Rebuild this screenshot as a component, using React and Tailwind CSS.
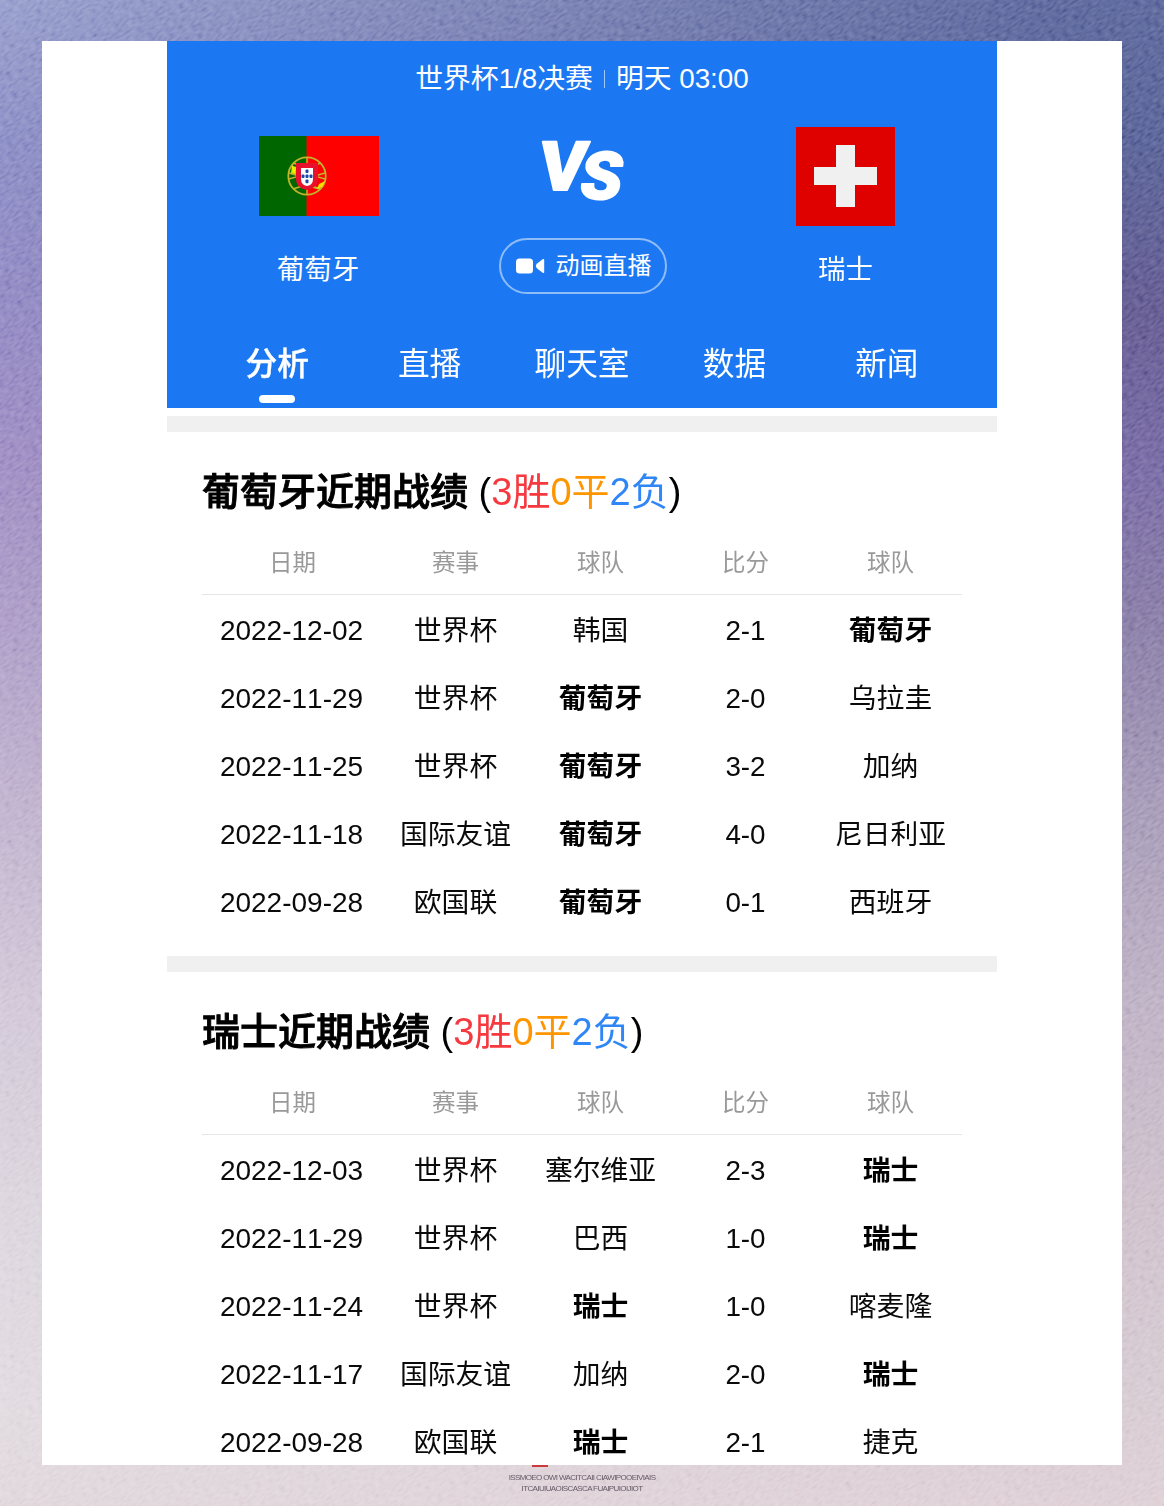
import React from "react";

const reports = [
  {
    team: "葡萄牙",
    rows: [
      ["2022-12-02", "世界杯", "韩国", "2-1", "葡萄牙"],
      ["2022-11-29", "世界杯", "葡萄牙", "2-0", "乌拉圭"],
      ["2022-11-25", "世界杯", "葡萄牙", "3-2", "加纳"],
      ["2022-11-18", "国际友谊", "葡萄牙", "4-0", "尼日利亚"],
      ["2022-09-28", "欧国联", "葡萄牙", "0-1", "西班牙"],
    ],
  },
  {
    team: "瑞士",
    rows: [
      ["2022-12-03", "世界杯", "塞尔维亚", "2-3", "瑞士"],
      ["2022-11-29", "世界杯", "巴西", "1-0", "瑞士"],
      ["2022-11-24", "世界杯", "瑞士", "1-0", "喀麦隆"],
      ["2022-11-17", "国际友谊", "加纳", "2-0", "瑞士"],
      ["2022-09-28", "欧国联", "瑞士", "2-1", "捷克"],
    ],
  },
];

const tabs = ["分析", "直播", "聊天室", "数据", "新闻"];
const columns = ["日期", "赛事", "球队", "比分", "球队"];

function Backdrop() {
  return (
    <div className="absolute inset-0">
      <div className="absolute inset-0 bg-[linear-gradient(180deg,#9299c9_0px,#8688c2_140px,#8c84c0_300px,#9a88c0_460px,#a796c4_600px,#bbaccb_780px,#d0c5d6_1000px,#dad3dc_1200px,#dfd9df_1400px,#dfd5da_1506px)]" />
      <div className="absolute inset-0 bg-[linear-gradient(180deg,#566197_0px,#525c92_140px,#5d548c_310px,#7264a0_470px,#8377a2_620px,#a095b3_800px,#baadc1_1000px,#cbbdc9_1200px,#d5c8d0_1400px,#dccdd3_1506px)] [mask-image:linear-gradient(90deg,transparent_0%,black_90%)]" />
      <svg className="absolute inset-0 h-full w-full mix-blend-soft-light" aria-hidden="true">
        <filter id="grain" x="0" y="0" width="100%" height="100%">
          <feTurbulence type="fractalNoise" baseFrequency="0.17 0.42" numOctaves="1" seed="4" />
          <feColorMatrix values="1.6 0 0 0 -0.3  1.6 0 0 0 -0.3  1.6 0 0 0 -0.3  0 0 0 0 1" />
        </filter>
        <rect x="-900" y="-400" width="2800" height="2800" filter="url(#grain)" opacity="0.45" transform="rotate(-32 582 753)" />
      </svg>
    </div>
  );
}

function PortugalFlag() {
  return (
    <svg className="h-[80px] w-[120px]" viewBox="0 0 120 80">
      <rect width="120" height="80" fill="#f00" />
      <rect width="47.5" height="80" fill="#060" />
      <g fill="none" stroke="#c2b42b" strokeWidth="1.5">
        <circle cx="48" cy="40" r="18.7" strokeWidth="1.8" />
        <path d="M30 37Q48 44 66 37M30 43Q48 36 66 43" />
        <path d="M34 27 Q48 33 62 27M34 53 Q48 47 62 53M33 29 Q39 50 62 53M48 21V59" />
      </g>
      <path d="M33 30l5 1-2 7-4-1zM60 48l6-3-3 6-5 2z" fill="#ff0" opacity="0.85" />
      <path d="M37 27h22v16q0 9-11 11q-11-2-11-11z" fill="#e8112d" />
      <path d="M42 32h12v11q0 6-6 7q-6-1-6-7z" fill="#fff" />
      <g fill="#1a47a8">
        <rect x="46.5" y="33.5" width="3" height="3.6" rx="1" />
        <rect x="46.5" y="38.5" width="3" height="3.6" rx="1" />
        <rect x="46.5" y="43.6" width="3" height="3.6" rx="1" />
        <rect x="42.5" y="38.5" width="3" height="3.6" rx="1" />
        <rect x="50.5" y="38.5" width="3" height="3.6" rx="1" />
      </g>
    </svg>
  );
}

function SwissFlag() {
  return (
    <svg className="h-[99px] w-[99px]" viewBox="0 0 99 99">
      <rect width="99" height="99" fill="#df0000" />
      <path d="M40 18h19v22h22v18h-22v22h-19v-22h-22v-18h22z" fill="#f0f0f0" />
    </svg>
  );
}

function Header() {
  return (
    <header className="flex h-[367px] flex-col bg-[#1b78f2] text-white">
      <div className="mt-[17.5px] flex h-10 items-center justify-center text-[27.8px]">
        <span>世界杯1/8决赛</span>
        <span className="mx-[11px] h-[18px] w-px bg-white/60" />
        <span>明天 03:00</span>
      </div>

      <div className="flex h-[199.5px]">
        <div className="flex w-[304px] flex-col items-center">
          <div className="flex h-[154px] items-center">
            <PortugalFlag />
          </div>
          <div className="-mt-[3px] mr-[2px] text-[27.5px] leading-10">葡萄牙</div>
        </div>
        <div className="flex flex-1 flex-col items-center">
          <svg className="mt-[13px] h-[116px] w-[140px]" viewBox="-20 -20 140 116" fill="#fff" stroke="#fff" strokeWidth="1.8" strokeLinejoin="round">
            <text transform="translate(4 57.5) skewX(-7)" textLength="47" lengthAdjust="spacingAndGlyphs" className="font-[Roboto] text-[68px] font-black">V</text>
            <text transform="translate(44.5 67) skewX(-9)" textLength="42" lengthAdjust="spacingAndGlyphs" className="font-[Roboto] text-[66px] font-black">S</text>
          </svg>
          <div className="mt-[10.5px] flex h-14 w-[168px] shrink-0 items-center rounded-full border-2 border-white/50 pl-[15px] text-2xl">
            <svg className="mr-[11px] h-4 w-[29px] shrink-0" viewBox="0 0 29 16" fill="#fff">
              <rect x="0" y="0.5" width="17" height="15" rx="3.5" />
              <path d="M27 1.1q1.2-.7 1.2.8v12.2q0 1.5-1.2.8l-5.6-4.2q-3-2.7 0-5.4z" />
            </svg>
            <span className="whitespace-nowrap">动画直播</span>
          </div>
        </div>
        <div className="flex w-[303px] flex-col items-center">
          <div className="flex h-[155px] items-center">
            <SwissFlag />
          </div>
          <div className="-mt-1 text-[27.5px] leading-10">瑞士</div>
        </div>
      </div>

      <nav className="mt-[39px] flex h-[70px] justify-between px-[34px]">
        {tabs.map((tab, i) => (
          <div key={tab} className="flex w-[152.5px] flex-col items-center text-[31.7px] leading-[54px]">
            <span className={i === 0 ? "font-medium [-webkit-text-stroke:0.4px_white]" : ""}>{tab}</span>
            {i === 0 && <span className="mt-[4px] h-2 w-9 rounded-full bg-white" />}
          </div>
        ))}
      </nav>
    </header>
  );
}

function Report({ team, rows }) {
  return (
    <section className="h-[524px] px-[35px] pt-[30px]">
      <h2 className="h-[60px] whitespace-nowrap text-[38px] leading-[60px] text-black">
        <span className="font-medium [-webkit-text-stroke:0.9px_black]">{team}近期战绩</span> (
        <span className="text-[#f5393f]">3胜</span>
        <span className="text-[#ff9500]">0平</span>
        <span className="text-[#2f86f6]">2负</span>)
      </h2>
      <div className="grid h-[73px] grid-cols-[181px_repeat(4,145px)] border-b border-[#e6e6e6] pt-[22px] text-center text-[23.5px] leading-[38px] text-[#999]">
        {columns.map((c, i) => (
          <span key={i}>{c}</span>
        ))}
      </div>
      {rows.map((row) => (
        <div
          key={row[0]}
          className="grid h-[68.2px] grid-cols-[181px_repeat(4,145px)] items-center pt-[3px] text-center text-[27.8px] leading-10 text-[#0a0a0a] [font-kerning:none]"
        >
          {row.map((cell, i) => (
            <span
              key={i}
              className={
                cell === team
                  ? "font-bold text-black"
                  : i === 0
                    ? "-ml-[2px] text-[28px]"
                    : ""
              }
            >
              {cell}
            </span>
          ))}
        </div>
      ))}
    </section>
  );
}

export default function App() {
  return (
    <div className="relative h-[1506px] w-[1164px] overflow-hidden font-['Liberation_Sans','Noto_Sans_CJK_SC',sans-serif]">
      <Backdrop />
      <div className="relative flex flex-col items-center pt-[41px]">
        <main className="flex h-[1424px] w-[1080px] justify-center overflow-hidden bg-white">
          <div className="w-[830px] shrink-0">
            <Header />
            <div className="mt-2 h-4 bg-[#f0f0f0]" />
            <Report {...reports[0]} />
            <div className="h-4 bg-[#f0f0f0]" />
            <Report {...reports[1]} />
          </div>
        </main>
        <footer className="flex w-[146px] flex-col items-center text-[8px] leading-[11px] text-[#665966]">
          <span className="mr-[84px] h-[2px] w-4 bg-[#c93c3c]" />
          <span className="mt-[5px] whitespace-nowrap tracking-[-0.62px]">ISSMOEO OWI WACITCAII CIAWIPOOEIVIAIS</span>
          <span className="whitespace-nowrap tracking-[-0.62px]">ITCAIUIUAOISCASCA FUAIPUIOIJIOT</span>
        </footer>
      </div>
    </div>
  );
}
